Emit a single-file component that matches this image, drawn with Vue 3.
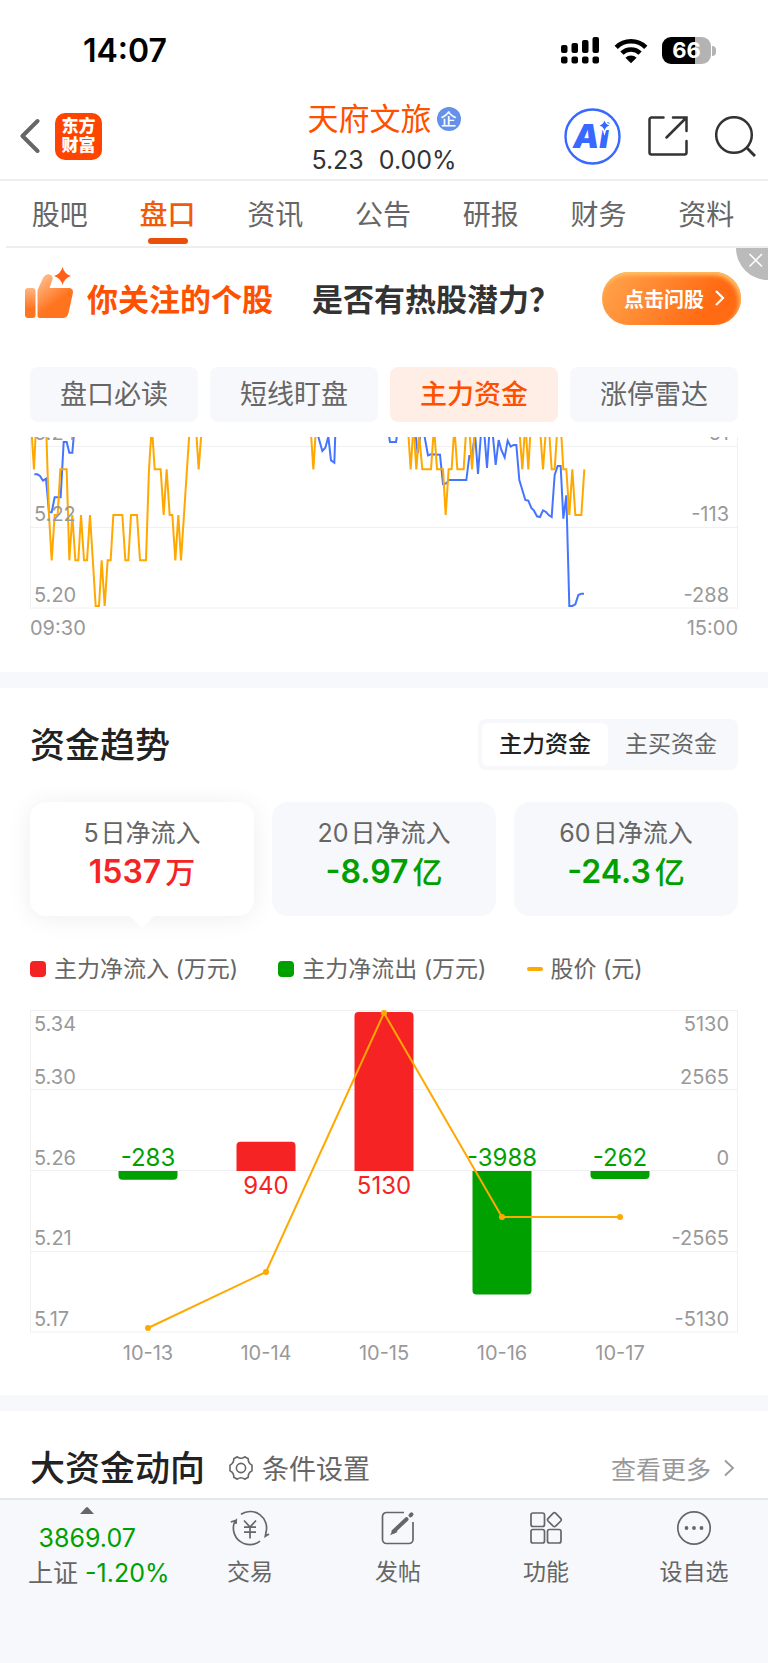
<template>
  <div class="page">
    <div class="status-bar">
      <span class="clock">14:07</span>
      <div class="status-icons">
        <svg width="39" height="28" viewBox="0 0 39 28">
          <rect x="0" y="8" width="6.5" height="8" rx="2" />
          <rect x="10.5" y="6" width="6.5" height="10" rx="2" />
          <rect x="21" y="3" width="6.5" height="13" rx="2" />
          <rect x="31.5" y="0" width="6.5" height="16" rx="2" />
          <rect v-for="x in [0, 10.5, 21, 31.5]" :key="x" :x="x" y="19.5" width="6.5" height="7" rx="2" />
        </svg>
        <svg width="34" height="26" viewBox="0 0 34 26">
          <g fill="none" stroke="#000" stroke-width="4.6">
            <path d="M2.2 9.4a21 21 0 0 1 29.6 0" />
            <path d="M7.9 15.2a13 13 0 0 1 18.2 0" />
          </g>
          <path d="M17 25.2l-5.6-5.5a8 8 0 0 1 11.2 0z" />
        </svg>
        <div class="battery"><span class="battery-body">66</span><span class="battery-cap"></span></div>
      </div>
    </div>

    <header class="header">
      <div class="header-left">
        <button class="icon-btn" aria-label="返回">
          <svg width="20" height="36" viewBox="0 0 20 36">
            <path d="M17.5 3L2.5 18l15 15" fill="none" stroke="#666" stroke-width="4" stroke-linecap="round" stroke-linejoin="round" />
          </svg>
        </button>
        <div class="logo"><span>东方</span><span>财富</span></div>
      </div>
      <div class="stock">
        <h1 class="stock-name">天府文旅<span class="badge">企</span></h1>
        <p class="stock-price"><span>5.23</span><span>0.00%</span></p>
      </div>
      <div class="header-right">
        <button class="icon-btn" aria-label="Ai">
          <svg width="57" height="57" viewBox="0 0 57 57">
            <circle cx="28.5" cy="28.5" r="27" fill="none" stroke="#3768ff" stroke-width="2.4" />
            <text class="ai-text" x="27" y="40" text-anchor="middle">Ai</text>
            <path class="ai-star" d="M40.5 12.5q1.200 4 5 5q-3.800 1-5 5q-1.200-4-5-5q3.800-1 5-5z" />
          </svg>
        </button>
        <button class="icon-btn" aria-label="分享">
          <svg width="40" height="40" viewBox="0 0 40 40" fill="none" stroke="#333" stroke-width="2.5">
            <path d="M15.5 1.500H3.500a2 2 0 0 0-2 2v33a2 2 0 0 0 2 2h33a2 2 0 0 0 2-2V25" stroke-linecap="round" />
            <path d="M25 1.500h13.500V15M38 2L18.500 21.500" stroke-linecap="round" />
          </svg>
        </button>
        <button class="icon-btn" aria-label="搜索">
          <svg width="41" height="41" viewBox="0 0 41 41" fill="none" stroke="#333" stroke-width="2.5">
            <circle cx="19" cy="19" r="17.8" />
            <path d="M31 31l9 9" stroke-width="3" />
          </svg>
        </button>
      </div>
    </header>

    <nav class="tabs">
      <a v-for="tab in tabs" :key="tab" href="#" :class="['tab', tab === '盘口' ? 'active' : '']">{{ tab }}</a>
    </nav>

    <div class="banner">
      <svg class="thumb" width="50" height="52" viewBox="0 0 50 52">
        <defs>
          <linearGradient id="hand" x1="0" y1="0" x2=".45" y2=".7">
            <stop offset="0" stop-color="#ffc79b" />
            <stop offset="1" stop-color="#ff741f" />
          </linearGradient>
          <linearGradient id="cuff" x1="0" y1="0" x2="0" y2="1">
            <stop offset="0" stop-color="#ffb583" />
            <stop offset=".7" stop-color="#ff741f" />
          </linearGradient>
        </defs>
        <rect x="1" y="21" width="10.5" height="30" rx="3" fill="url(#cuff)" />
        <path d="M13.500 24q0-2 1.200-3.500L19 11c2-3.500 5-4.500 7.500-3.200s2.500 4 1.500 6L25.500 21H44c4 0 5.600 2 4.800 5.500L44.500 46c-.8 3-2.500 5-5.500 5H16q-2.500 0-2.500-2.500z" fill="url(#hand)" />
        <path d="M38.500 0q2 7.200 8.500 9q-6.500 1.800-8.500 9q-2-7.200-8.500-9q6.500-1.800 8.500-9z" fill="#ff5f17" />
      </svg>
      <strong class="banner-lead">你关注的个股</strong>
      <strong class="banner-text">是否有热股潜力？</strong>
      <button class="ask-btn">
        点击问股
        <svg width="11" height="18" viewBox="0 0 11 18">
          <path d="M2 2l7 7-7 7" fill="none" stroke="#fff" stroke-width="2.2" />
        </svg>
      </button>
      <button class="close-btn" aria-label="关闭">
        <svg width="32" height="32" viewBox="0 0 32 32">
          <path d="M0 0h32v32A32 32 0 0 1 0 0z" fill="#bbb" />
          <path d="M13.500 6l12.500 12.500M26 6L13.500 18.500" stroke="#fff" stroke-width="1.5" />
        </svg>
      </button>
    </div>

    <section class="intraday">
      <div class="pills">
        <button v-for="pill in pills" :key="pill" :class="['pill', pill === '主力资金' ? 'active' : '']">{{ pill }}</button>
      </div>
      <svg class="chart" viewBox="0 0 708 172">
        <path d="M0.500 0V171M707.500 0V171M0 9.500H708M0 90.500H708M0 171H708" class="grid" />
        <!-- the plotted lines use three units per pixel, one group for each trading session -->
        <g transform="scale(0.33333)">
          <g transform="translate(-90 -51)">
            <polyline v-for="p in morning.flow" :key="p" :points="p" class="flow" />
            <polyline v-for="p in morning.price" :key="p" :points="p" class="price" />
          </g>
          <g transform="translate(1062 -51)">
            <polyline v-for="p in afternoon.flow" :key="p" :points="p" class="flow" />
            <polyline v-for="p in afternoon.price" :key="p" :points="p" class="price" />
          </g>
        </g>
        <g class="axis">
          <text x="4" y="3">5.24</text>
          <text x="4" y="84">5.22</text>
          <text x="4" y="165">5.20</text>
          <g text-anchor="end">
            <text x="699" y="3">61</text>
            <text x="699" y="84">-113</text>
            <text x="699" y="165">-288</text>
          </g>
        </g>
      </svg>
      <div class="time-axis"><span>09:30</span><span>15:00</span></div>
    </section>

    <section class="trend">
      <div class="trend-head">
        <h2>资金趋势</h2>
        <div class="segment">
          <button class="segment-btn active">主力资金</button>
          <button class="segment-btn">主买资金</button>
        </div>
      </div>
      <div class="cards">
        <button v-for="(card, i) in cards" :key="card.days" :class="['card', i === 0 ? 'active' : '']">
          <span class="card-label"><span>{{ card.days }}</span>日净流入</span>
          <span :class="['card-value', card.up ? 'up' : 'down']">{{ card.value }}<span class="unit">{{ card.unit }}</span></span>
        </button>
      </div>
      <ul class="legend">
        <li><i class="mark in"></i>主力净流入 (万元)</li>
        <li><i class="mark out"></i>主力净流出 (万元)</li>
        <li><i class="mark line"></i>股价 (元)</li>
      </ul>
      <svg class="chart" viewBox="0 0 708 360">
        <path d="M0.500 0V322M707.500 0V322M0 .5H708M0 79.500H708M0 160.500H708M0 241.500H708M0 322H708" class="grid" />
        <g class="axis">
          <text v-for="a in axis" :key="a.left" x="4" :y="a.y">{{ a.left }}</text>
          <text v-for="a in axis" :key="a.right" x="699" :y="a.y" text-anchor="end">{{ a.right }}</text>
        </g>
        <g v-for="(d, i) in days" :key="d.date" text-anchor="middle">
          <path :d="barPath(i, d.flow)" :class="d.flow > 0 ? 'bar-in' : 'bar-out'" />
          <text :x="barX(i)" :y="d.flow > 0 ? 184 : 156" :class="['bar-value', d.flow > 0 ? 'bar-in' : 'bar-out']">{{ d.flow }}</text>
          <text :x="barX(i)" y="350" class="axis">{{ d.date }}</text>
        </g>
        <polyline :points="pricePoints" class="trend-line" />
        <circle v-for="(d, i) in days" :key="d.date" :cx="barX(i)" :cy="d.y" r="3" fill="#ffa800" />
      </svg>
    </section>

    <section class="moves">
      <h2>大资金动向</h2>
      <button class="settings">
        <svg width="26" height="26" viewBox="0 0 26 26" fill="none" stroke="#666" stroke-width="1.6">
          <path d="M9.300 1.800Q13 4.600 16.700 1.800L20.200 3.800Q20 8.200 24 10.200V15.800Q20 17.800 20.200 22.200L16.700 24.200Q13 21.400 9.300 24.200L5.800 22.200Q6 17.800 2 15.800V10.200Q6 8.200 5.800 3.800z" stroke-linejoin="round" />
          <circle cx="13" cy="13" r="4.6" />
        </svg>
        条件设置
      </button>
      <a href="#" class="more">
        查看更多
        <svg width="12" height="18" viewBox="0 0 12 18">
          <path d="M2 1.500L10 9l-8 7.500" fill="none" stroke="#999" stroke-width="1.8" />
        </svg>
      </a>
    </section>

    <footer class="bottom-bar">
      <a href="#" class="index">
        <span class="index-top">
          <svg width="14" height="7" viewBox="0 0 14 7"><path d="M0 7l6-6.500q1-1 2 0L14 7z" fill="#666" /></svg>
          <span class="down">3869.07</span>
        </span>
        <span class="index-change">上证 <span class="down">-1.20%</span></span>
      </a>
      <a href="#" class="action">
        <svg width="40" height="36" viewBox="0 0 40 36">
          <path d="M11 4.200A16.500 16.500 0 0 1 36 22.300L35.300 26.300L39 24" />
          <path d="M30 31.200A16.500 16.500 0 0 1 4.800 11.500L6.200 10.300L6 14M6.200 10.300L.8 12" />
          <path d="M14 10.500l6 6.500 6-6.500M20 17v11.500M14 17.200h12M14 22.200h12" />
        </svg>
        交易
      </a>
      <a href="#" class="action">
        <svg width="40" height="36" viewBox="0 0 40 36">
          <path d="M26 2.500H8.500a4 4 0 0 0-4 4v23a4 4 0 0 0 4 4H31a4 4 0 0 0 4-4V12" />
          <path d="M15.500 21.500L28.500 9.200" stroke-width="4" stroke-linecap="round" />
          <path d="M14 23.500l2-3.500 2 1.800z" fill="#666" />
          <path d="M32.500 5.300l1-1" stroke-width="4" stroke-linecap="round" />
        </svg>
        发帖
      </a>
      <a href="#" class="action">
        <svg width="40" height="36" viewBox="0 0 40 36">
          <rect x="5" y="3" width="13.5" height="13.5" rx="2" />
          <rect x="5" y="19.5" width="13.5" height="13.5" rx="2" />
          <rect x="21.5" y="19.5" width="13.5" height="13.5" rx="2" />
          <path d="M27.200 3.200q1.200-1 2.400 0l5.200 5.400q1 1.200 0 2.400l-5.200 5.200q-1.200 1-2.400 0l-5.200-5.200q-1-1.200 0-2.400z" />
        </svg>
        功能
      </a>
      <a href="#" class="action">
        <svg width="40" height="36" viewBox="0 0 40 36">
          <circle cx="20" cy="18" r="16.2" />
          <g fill="#666" stroke="none">
            <circle cx="12.5" cy="18" r="1.9" />
            <circle cx="20" cy="18" r="1.9" />
            <circle cx="27.5" cy="18" r="1.9" />
          </g>
        </svg>
        设自选
      </a>
    </footer>
  </div>
</template>

<script setup>
import { computed } from "vue";

const tabs = ["股吧", "盘口", "资讯", "公告", "研报", "财务", "资料"];
const pills = ["盘口必读", "短线盯盘", "主力资金", "涨停雷达"];

const cards = [
  { days: "5", value: "1537", unit: "万", up: true },
  { days: "20", value: "-8.97", unit: "亿", up: false },
  { days: "60", value: "-24.3", unit: "亿", up: false },
];

const morning = {
  flow: [
    "103,163 112,163 120,168 129,182 138,176 147,277 155,277 164,232 182,232 191,66 200,66 208,98 217,98 222,40",
    "952,40 967,93 976,83 985,50 993,121 1003,128 1006,40",
  ],
  price: [
    "95,40 102,148 107,40",
    "139,40 147,285 155,421 164,285 173,285 181,148 200,148 208,421 217,285 226,421 235,421 243,285 252,421 261,421 270,285 287,558 297,558 305,421 314,558 323,421 332,421 340,285 367,285 376,421 385,421 393,285 411,285 420,421 438,421 447,148 453,54 458,54 464,148 482,148 491,285 500,148 509,285 517,285 526,421 535,285 543,421 568,40",
    "589,40 596,148 604,40",
    "933,40 940,148 947,40",
  ],
};

const afternoon = {
  flow: [
    "14,40 18,66 36,66 40,40",
    "94,40 101,100 110,40",
    "120,40 132,106 141,103 168,104 177,192 187,190 195,180 247,180 256,108 264,108 273,40 282,162 291,40",
    "301,40 309,144 316,40",
    "326,40 335,135 344,60 352,90 362,112 371,62 380,80 389,75 397,75 406,180 424,240 433,242 442,264 450,272 459,289 468,291 477,271 486,276 495,286 503,291 512,165 521,138 530,138 538,296 547,226 556,558 565,558 574,553 583,525 592,521 600,521",
  ],
  price: [
    "73,40 80,148 87,40",
    "90,40 97,148 105,40 115,148 141,148 150,20 159,148 177,148 185,285 194,148 203,148 211,20 220,148 239,148 247,20",
    "257,40 264,148 272,40",
    "407,40 415,148 422,40",
    "426,40 433,148 439,40",
    "469,40 477,148 485,40",
    "494,11 503,148 512,148 521,11",
    "530,11 538,148 547,148 556,285 565,148 574,285 592,285 601,148",
  ],
};

const axis = [
  { left: "5.34", right: "5130", y: 21 },
  { left: "5.30", right: "2565", y: 74 },
  { left: "5.26", right: "0", y: 155 },
  { left: "5.21", right: "-2565", y: 235 },
  { left: "5.17", right: "-5130", y: 316 },
];

const days = [
  { date: "10-13", flow: -283, y: 318 },
  { date: "10-14", flow: 940, y: 262 },
  { date: "10-15", flow: 5130, y: 3 },
  { date: "10-16", flow: -3988, y: 207 },
  { date: "10-17", flow: -262, y: 207 },
];

const ZERO = 161;
const pricePoints = computed(() => days.map((d, i) => `${barX(i)},${d.y}`).join(" "));

function barX(i) {
  return 118 * (i + 1);
}

// bar with its two outer corners rounded
function barPath(i, flow) {
  const x = barX(i) - 29.5;
  const h = (Math.abs(flow) / 5130) * 159;
  const end = flow > 0 ? ZERO - h : ZERO + h;
  const r = flow > 0 ? 4 : -4;
  return `M${x} ${ZERO}V${end + r}q0 ${-r} 4 ${-r}h51q4 0 4 ${r}V${ZERO}z`;
}
</script>

<style>
body {
  margin: 0;
  background: #fff;
}
</style>

<style scoped>
.page {
  display: flex;
  flex-direction: column;
  min-height: 100vh;
  font-family: Inter, "Noto Sans CJK SC", sans-serif;
  color: #666;
  overflow-x: hidden;
}
h1,
h2,
p,
ul {
  margin: 0;
  padding: 0;
}
button {
  margin: 0;
  padding: 0;
  border: 0;
  background: none;
  font: inherit;
  color: inherit;
  cursor: pointer;
}
a {
  color: inherit;
  text-decoration: none;
}
svg {
  display: block;
  flex-shrink: 0;
}
.up {
  color: #f52323;
}
.down {
  color: #00a000;
}

.status-bar {
  display: flex;
  align-items: center;
  justify-content: space-between;
  height: 85px;
  padding: 8px 52px 0 83px;
  color: #000;
}
.clock {
  font-size: 32px;
  font-weight: 600;
}
.status-icons {
  display: flex;
  align-items: center;
  gap: 14px;
}
.battery {
  display: flex;
  align-items: center;
  gap: 1px;
}
.battery-body {
  width: 49px;
  line-height: 27px;
  border-radius: 9px;
  background: linear-gradient(90deg, #000 67%, #b3b3b3 67%);
  color: #fff;
  font-size: 22px;
  font-weight: 700;
  text-align: center;
}
.battery-cap {
  width: 4px;
  height: 10px;
  border-radius: 0 5px 5px 0;
  background: #b3b3b3;
}

.header {
  display: grid;
  grid-template-columns: 1fr auto 1fr;
  align-items: center;
  height: 86px;
  padding: 0 12px;
  border-bottom: 2px solid #eee;
}
.header-left,
.header-right {
  display: flex;
  align-items: center;
}
.header-left {
  gap: 15px;
  padding-left: 8px;
}
.header-right {
  justify-content: flex-end;
  gap: 27px;
}
.logo {
  display: flex;
  flex-direction: column;
  align-items: center;
  justify-content: center;
  width: 47px;
  height: 47px;
  border-radius: 10px;
  background: #ff4400;
  color: #fff;
  font-size: 17px;
  font-weight: 900;
  line-height: 19px;
}
.stock {
  padding-top: 4px;
  text-align: center;
}
.stock-name {
  display: flex;
  align-items: center;
  justify-content: center;
  gap: 5px;
  color: #ff5000;
  font-size: 31px;
  font-weight: 400;
  line-height: 44px;
}
.badge {
  width: 24px;
  border-radius: 50%;
  background: #6691ea;
  color: #fff;
  font-size: 16px;
  font-weight: 500;
  line-height: 24px;
}
.stock-price {
  display: flex;
  justify-content: center;
  gap: 15px;
  color: #333;
  font-size: 25px;
  line-height: 38px;
}
.ai-text {
  fill: #3768ff;
  font-size: 33px;
  font-style: italic;
  font-weight: 900;
}
.ai-star {
  fill: #3768ff;
  stroke: #fff;
  stroke-width: 3px;
  paint-order: stroke;
}

.tabs {
  display: flex;
  height: 65px;
  margin-left: 6px;
  padding-right: 8px;
  border-bottom: 2px solid #eee;
}
.tab {
  display: flex;
  flex: 1;
  flex-direction: column;
  align-items: center;
  font-size: 28px;
  line-height: 68px;
}
.tab.active {
  color: #f05a0a;
  font-weight: 500;
}
.tab.active::after {
  content: "";
  width: 40px;
  height: 6px;
  margin-top: -11px;
  border-radius: 3px;
  background: #e8500a;
}

.banner {
  position: relative;
  display: flex;
  align-items: center;
  height: 100px;
  padding: 0 27px 4px 24px;
}
.thumb {
  margin: -10px 13px 0 0;
}
.banner-lead,
.banner-text {
  margin-top: -2px;
  font-size: 31px;
  font-weight: 700;
  white-space: nowrap;
}
.banner-lead {
  color: #ff5000;
}
.banner-text {
  margin-left: 39px;
  color: #333;
}
.ask-btn {
  display: flex;
  align-items: center;
  justify-content: center;
  gap: 10px;
  width: 139px;
  height: 53px;
  margin-left: auto;
  padding-left: 6px;
  border-radius: 27px;
  background: linear-gradient(120deg, #ffa64d, #ff6a13 75%);
  box-shadow: inset -2px 3px 4px #ffc266;
  color: #fff;
  font-size: 20px;
  font-weight: 700;
}
.close-btn {
  position: absolute;
  top: 0;
  right: 0;
}

.intraday {
  padding: 15px 30px 25px;
  border-bottom: 16px solid #f6f8fb;
}
.pills {
  display: flex;
  gap: 12px;
  margin-bottom: 15px;
}
.pill {
  flex: 1;
  border-radius: 8px;
  background: #f7f8fb;
  font-size: 27px;
  line-height: 55px;
}
.pill.active {
  background: #ffeee6;
  color: #ff5000;
  font-weight: 500;
}
.chart {
  width: 100%;
  height: auto;
}
.grid {
  fill: none;
  stroke: #f0f0f0;
  stroke-width: 1px;
}
.flow,
.price {
  fill: none;
  stroke-width: 6px;
}
.flow {
  stroke: #4575ff;
}
.price {
  stroke: #ffa800;
}
.axis {
  fill: #999;
  font-size: 20px;
}
.time-axis {
  display: flex;
  justify-content: space-between;
  color: #999;
  font-size: 20px;
  line-height: 38px;
}

.trend {
  padding: 31px 30px 25px;
  border-bottom: 16px solid #f6f8fb;
}
.trend-head {
  display: flex;
  align-items: center;
  justify-content: space-between;
  margin-bottom: 32px;
}
h2 {
  color: #222;
  font-size: 35px;
  font-weight: 500;
  line-height: 50px;
}
.segment {
  display: flex;
  padding: 4px;
  border-radius: 8px;
  background: #f7f8fb;
}
.segment-btn {
  width: 126px;
  border-radius: 6px;
  font-size: 23px;
  line-height: 43px;
}
.segment-btn.active {
  background: #fff;
  color: #222;
  font-weight: 500;
}
.cards {
  display: flex;
  gap: 18px;
}
.card {
  position: relative;
  display: flex;
  flex: 1;
  flex-direction: column;
  align-items: center;
  height: 114px;
  padding-top: 12px;
  border-radius: 16px;
  background: #f7f8fb;
}
.card.active {
  background: #fff;
  box-shadow: 0 2px 26px rgba(0, 0, 0, 0.07);
}
.card.active::after {
  content: "";
  position: absolute;
  top: 100%;
  left: 50%;
  margin-left: -12px;
  border: 12px solid transparent;
  border-top-color: #fff;
  border-bottom: 0;
}
.card-label {
  display: flex;
  gap: 2px;
  font-size: 25px;
  line-height: 38px;
}
.card-value {
  display: flex;
  gap: 4px;
  font-size: 32px;
  font-weight: 600;
  line-height: 40px;
}
.unit {
  font-size: 30px;
  font-weight: 500;
}
.legend {
  display: flex;
  gap: 40px;
  margin: 36px 0 24px;
  list-style: none;
  font-size: 23px;
  line-height: 34px;
}
.legend li {
  display: flex;
  align-items: center;
  gap: 8px;
}
.mark {
  width: 16px;
  height: 16px;
  border-radius: 4px;
}
.mark.in {
  background: #f52323;
}
.mark.out {
  background: #00a000;
}
.mark.line {
  height: 4px;
  border-radius: 2px;
  background: #ffa800;
}
.bar-in {
  fill: #f52323;
}
.bar-out {
  fill: #00a000;
}
.bar-value {
  font-size: 24px;
}
.trend-line {
  fill: none;
  stroke: #ffa800;
  stroke-width: 2px;
}

.moves {
  display: flex;
  align-items: center;
  height: 87px;
  padding: 0 33px 0 30px;
}
.moves h2 {
  padding-top: 26px;
}
.settings,
.more {
  display: flex;
  align-items: center;
  padding-top: 26px;
}
.settings {
  gap: 8px;
  margin-left: 23px;
  font-size: 27px;
}
.more {
  gap: 12px;
  margin-left: auto;
  color: #999;
  font-size: 25px;
}

.bottom-bar {
  display: grid;
  grid-template-columns: repeat(5, 1fr);
  flex: 1;
  align-items: start;
  padding-left: 28px;
  border-top: 2px solid #e5e8eb;
  background: #f6f8fb;
}
.index {
  padding-top: 7px;
  font-size: 25px;
  white-space: nowrap;
}
.index-top {
  display: flex;
  flex-direction: column;
  align-items: center;
  gap: 6px;
  width: 80%;
  line-height: 36px;
}
.index-change {
  display: block;
  line-height: 34px;
}
.action {
  display: flex;
  flex-direction: column;
  align-items: center;
  gap: 8px;
  padding-top: 10px;
  font-size: 23px;
  line-height: 36px;
}
.action svg {
  fill: none;
  stroke: #666;
  stroke-width: 1.7;
}
</style>
